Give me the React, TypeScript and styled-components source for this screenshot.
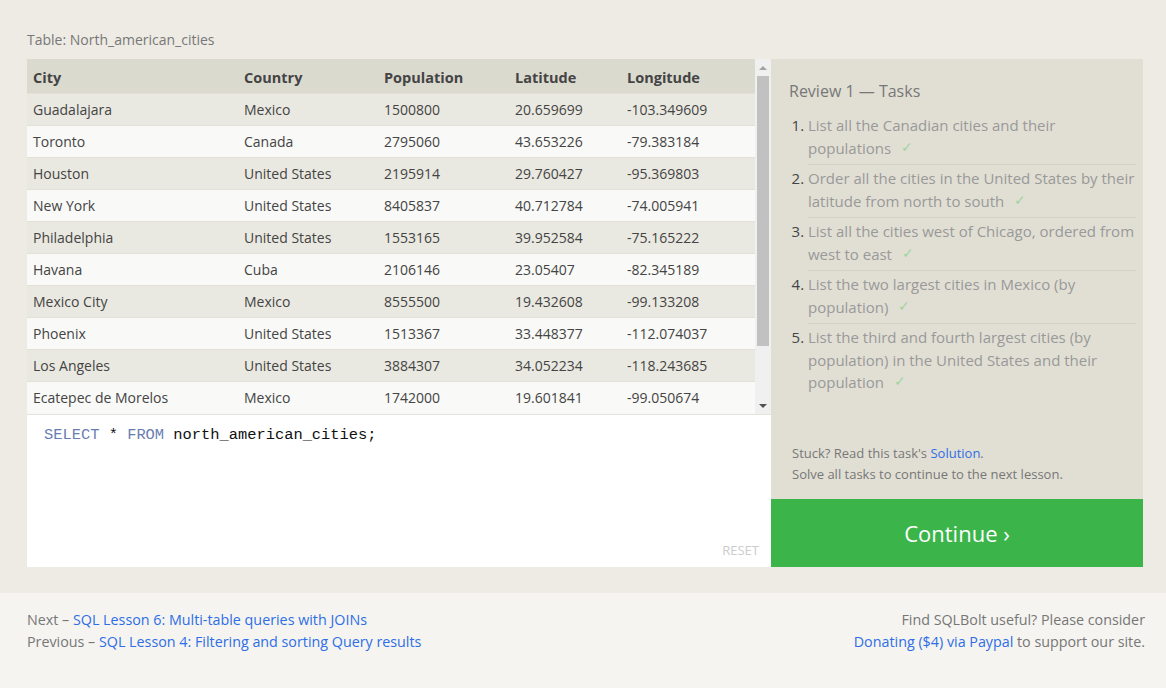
import styled, { createGlobalStyle } from 'styled-components';

const GlobalStyle = createGlobalStyle`
  html, body {
    margin: 0;
    padding: 0;
    background: #f5f4f0;
    font-family: "Open Sans", "Noto Sans", sans-serif;
  }
`;

const columns = [
  { key: 'city', label: 'City', width: 211 },
  { key: 'country', label: 'Country', width: 140 },
  { key: 'population', label: 'Population', width: 131 },
  { key: 'latitude', label: 'Latitude', width: 112 },
  { key: 'longitude', label: 'Longitude', width: 134 },
];

const rows = [
  ['Guadalajara', 'Mexico', '1500800', '20.659699', '-103.349609'],
  ['Toronto', 'Canada', '2795060', '43.653226', '-79.383184'],
  ['Houston', 'United States', '2195914', '29.760427', '-95.369803'],
  ['New York', 'United States', '8405837', '40.712784', '-74.005941'],
  ['Philadelphia', 'United States', '1553165', '39.952584', '-75.165222'],
  ['Havana', 'Cuba', '2106146', '23.05407', '-82.345189'],
  ['Mexico City', 'Mexico', '8555500', '19.432608', '-99.133208'],
  ['Phoenix', 'United States', '1513367', '33.448377', '-112.074037'],
  ['Los Angeles', 'United States', '3884307', '34.052234', '-118.243685'],
  ['Ecatepec de Morelos', 'Mexico', '1742000', '19.601841', '-99.050674'],
];

const tasks = [
  'List all the Canadian cities and their populations',
  'Order all the cities in the United States by their latitude from north to south',
  'List all the cities west of Chicago, ordered from west to east',
  'List the two largest cities in Mexico (by population)',
  'List the third and fourth largest cities (by population) in the United States and their population',
];

export default function App() {
  return (
    <>
      <GlobalStyle />
      <Main>
        <TableLabel>Table: North_american_cities</TableLabel>
        <Workspace>
          <LeftColumn>
            <TableArea>
              <TableClip>
                <Table>
                  <colgroup>
                    {columns.map((c) => (
                      <col key={c.key} style={{ width: c.width }} />
                    ))}
                  </colgroup>
                  <thead>
                    <tr>
                      {columns.map((c) => (
                        <HeadCell key={c.key}>{c.label}</HeadCell>
                      ))}
                    </tr>
                  </thead>
                  <tbody>
                    {rows.map((r, i) => (
                      <Row key={r[0]} $odd={i % 2 === 0}>
                        {r.map((v, j) => (
                          <Cell key={j}>{v}</Cell>
                        ))}
                      </Row>
                    ))}
                  </tbody>
                </Table>
              </TableClip>
              <Scrollbar>
                <ArrowBox>
                  <Arrow $up />
                </ArrowBox>
                <Track>
                  <Thumb />
                </Track>
                <ArrowBox>
                  <Arrow />
                </ArrowBox>
              </Scrollbar>
            </TableArea>
            <Editor>
              <Code>
                <Keyword>SELECT</Keyword> * <Keyword>FROM</Keyword> north_american_cities;
              </Code>
              <Reset>RESET</Reset>
            </Editor>
          </LeftColumn>
          <RightColumn>
            <TaskPanel>
              <TaskTitle>Review 1 — Tasks</TaskTitle>
              <TaskList>
                {tasks.map((t) => (
                  <Task key={t}>
                    {t}
                    <Check>✓</Check>
                  </Task>
                ))}
              </TaskList>
              <Hint>
                Stuck? Read this task's <Link href="#">Solution</Link>.
                <br />
                Solve all tasks to continue to the next lesson.
              </Hint>
            </TaskPanel>
            <ContinueButton>Continue ›</ContinueButton>
          </RightColumn>
        </Workspace>
      </Main>
      <Footer>
        <FooterLeft>
          <div>
            Next – <Link href="#">SQL Lesson 6: Multi-table queries with JOINs</Link>
          </div>
          <div>
            Previous – <Link href="#">SQL Lesson 4: Filtering and sorting Query results</Link>
          </div>
        </FooterLeft>
        <FooterRight>
          <div>Find SQLBolt useful? Please consider</div>
          <div>
            <Link href="#">Donating ($4) via Paypal</Link> to support our site.
          </div>
        </FooterRight>
      </Footer>
    </>
  );
}

const Main = styled.section`
  background: #eeebe4;
  padding: 30px 23px 26px 27px;
`;

const TableLabel = styled.div`
  font-size: 14px;
  line-height: 20px;
  color: #777;
  margin-bottom: 9px;
`;

const Workspace = styled.div`
  display: flex;
  height: 508px;
`;

const LeftColumn = styled.div`
  width: 744px;
  display: flex;
  flex-direction: column;
`;

const TableArea = styled.div`
  display: flex;
  height: 355px;
  background: #f8f8f6;
`;

const TableClip = styled.div`
  flex: 1;
  overflow: hidden;
`;

const Table = styled.table`
  width: 728px;
  border-collapse: collapse;
  table-layout: fixed;
  font-size: 14px;
  color: #444;

  th,
  td {
    box-sizing: border-box;
  }
`;

const HeadCell = styled.th`
  background: #dbdacf;
  height: 34px;
  padding: 3px 0 0 6px;
  text-align: left;
  font-weight: 700;
  font-size: 14.5px;
  color: #444;
`;

const Row = styled.tr<{ $odd: boolean }>`
  background: ${(p) => (p.$odd ? '#eae9e1' : '#f9f9f7')};
  border-top: 1px solid #e2e0d8;
`;

const Cell = styled.td`
  height: 32px;
  padding: 0 0 0 6px;
  white-space: nowrap;
`;

const Scrollbar = styled.div`
  width: 16px;
  display: flex;
  flex-direction: column;
  background: #f0f0f0;
`;

const ArrowBox = styled.div`
  height: 17px;
  display: flex;
  align-items: center;
  justify-content: center;
`;

const Arrow = styled.div<{ $up?: boolean }>`
  width: 0;
  height: 0;
  border-left: 4px solid transparent;
  border-right: 4px solid transparent;
  ${(p) =>
    p.$up
      ? 'border-bottom: 4px solid #a3a3a3;'
      : 'border-top: 4px solid #505050;'}
`;

const Track = styled.div`
  flex: 1;
  padding: 0 2px;
`;

const Thumb = styled.div`
  height: 270px;
  background: #c1c1c1;
`;

const Editor = styled.div`
  flex: 1;
  background: #fff;
  display: flex;
  flex-direction: column;
  justify-content: space-between;
  padding: 9px 12px 8px 17px;
  border-top: 1px solid #e5e3dc;
`;

const Code = styled.div`
  font-family: "Liberation Mono", "DejaVu Sans Mono", monospace;
  font-size: 15.4px;
  line-height: 22px;
  color: #111;
`;

const Keyword = styled.span`
  color: #6a7db3;
`;

const Reset = styled.div`
  align-self: flex-end;
  font-size: 13px;
  color: #ccc;
`;

const RightColumn = styled.div`
  flex: 1;
  display: flex;
  flex-direction: column;
`;

const TaskPanel = styled.div`
  flex: 1;
  background: #e1dfd4;
  padding: 20px 7px 14px 18px;
  display: flex;
  flex-direction: column;
`;

const TaskTitle = styled.div`
  font-size: 16px;
  line-height: 24px;
  color: #777;
  margin-bottom: 9px;
`;

const TaskList = styled.ol`
  margin: 0;
  padding: 0 0 0 19px;
  flex: 1;
`;

const Task = styled.li`
  font-size: 15px;
  line-height: 22.5px;
  color: #999;
  padding: 2px 0 5px;
  border-bottom: 1px solid #d3d1c6;
  &:last-child {
    border-bottom: none;
  }
  &::marker {
    color: #444;
  }
`;

const Check = styled.span`
  display: inline-block;
  height: 18px;
  line-height: 18px;
  overflow: hidden;
  vertical-align: -2px;
  color: #9ed4a0;
  margin-left: 10px;
  font-size: 14px;
`;

const Hint = styled.div`
  font-size: 13px;
  line-height: 21px;
  color: #777;
  padding-left: 3px;
`;

const Link = styled.a`
  color: #2e6ee6;
  text-decoration: none;
`;

const ContinueButton = styled.button`
  height: 68px;
  border: none;
  background: #3bb54a;
  color: #fff;
  font-family: inherit;
  font-size: 22px;
  cursor: pointer;
`;

const Footer = styled.footer`
  display: flex;
  justify-content: space-between;
  padding: 16px 21px 0 27px;
  font-size: 14.3px;
  line-height: 22px;
  color: #777;
`;

const FooterLeft = styled.div``;

const FooterRight = styled.div`
  text-align: right;
`;
